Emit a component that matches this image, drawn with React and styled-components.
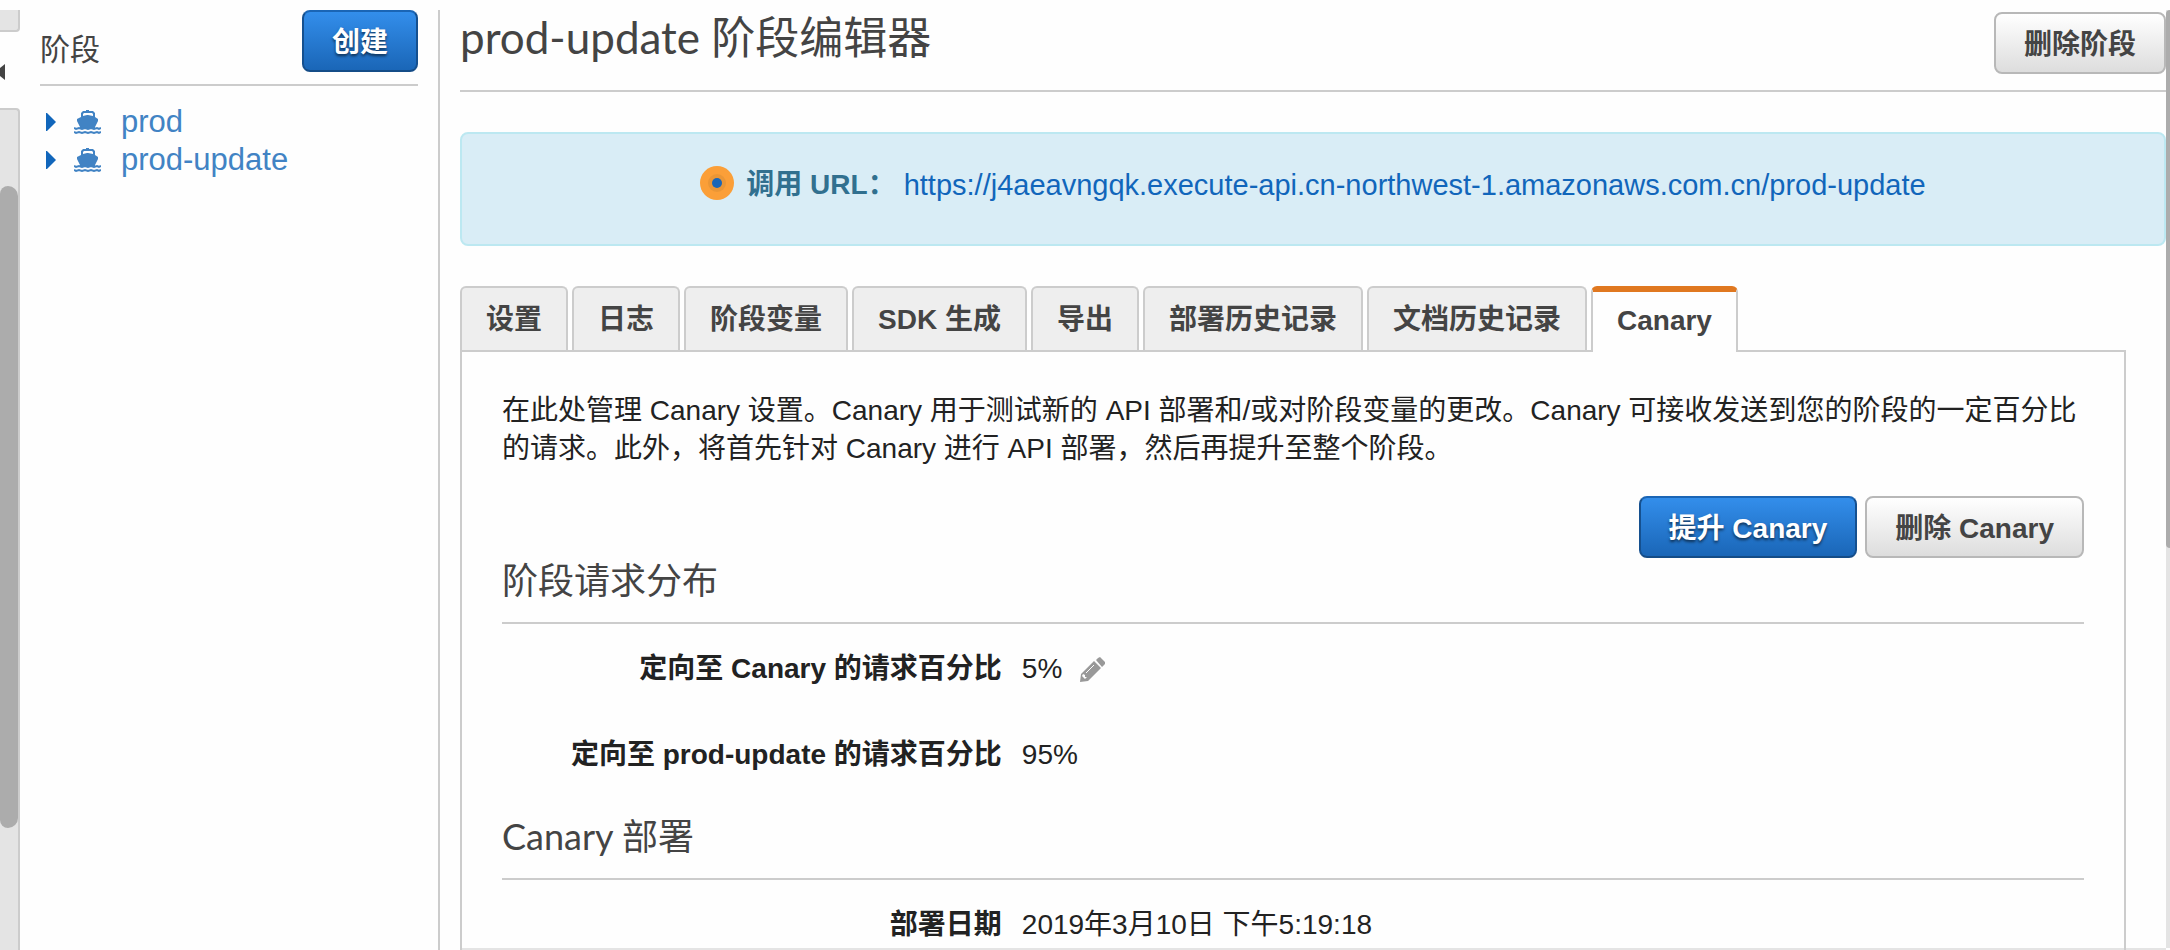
import React from "react";
import styled, { createGlobalStyle, css } from "styled-components";

const sans = `"Liberation Sans", "Noto Sans CJK SC", sans-serif`;
const display = `Lato, "Noto Sans CJK SC", sans-serif`;
const line = "#ccc";

const GlobalStyle = createGlobalStyle`
  * { box-sizing: border-box; }
  body {
    margin: 0;
    background: #fefefe;
    color: #222;
    font: 28px/38px ${sans};
    overflow: hidden;
  }
  h1, h2, h3, p, ul, dl, dd { margin: 0; padding: 0; }
`;

const Page = styled.div`
  display: flex;
  height: 100vh;
  padding-top: 10px;
`;

const Rail = styled.div`
  flex: none;
  width: 20px;
  display: flex;
  flex-direction: column;
`;

const RailTop = styled.div`
  height: 22px;
  background: #e4e4e4;
  border: solid ${line};
  border-width: 0 2px 2px 0;
  border-radius: 0 0 4px 0;
`;

const CollapseButton = styled.button`
  height: 76px;
  padding: 4px 0 0;
  border: 0;
  background: none;
  display: flex;
  align-items: center;
  svg { display: block; }
`;

const RailTrack = styled.div`
  flex: 1;
  padding-top: 76px;
  background: #e4e4e4;
  border: solid ${line};
  border-width: 2px 2px 0 0;
  border-radius: 0 4px 0 0;
`;

const RailThumb = styled.div`
  height: 84%;
  max-height: 642px;
  background: #acacac;
  border-radius: 8px 10px 10px 8px;
`;

const Sidebar = styled.nav`
  flex: none;
  width: 420px;
  padding: 0 20px;
  border-right: 2px solid ${line};
`;

const SidebarHeader = styled.header`
  display: flex;
  justify-content: space-between;
  align-items: flex-start;
  height: 76px;
  border-bottom: 2px solid ${line};
`;

const SidebarTitle = styled.h2`
  padding-top: 21px;
  color: #444;
  font: 400 30px/38px ${sans};
`;

const StageList = styled.ul`
  list-style: none;
  padding-top: 17px;
`;

const StageItem = styled.li`
  display: flex;
  align-items: center;
  height: 38px;
  padding-left: 6px;
`;

const Caret = styled.svg`
  flex: none;
  width: 10px;
  height: 18px;
  margin-right: 18px;
`;

const StageLink = styled.a`
  display: flex;
  align-items: center;
  gap: 20px;
  color: #4183c4;
  font-size: 31px;
  text-decoration: none;
`;

const Button = styled.button`
  height: 62px;
  padding: 3px 28px 0;
  border: 2px solid #b8b8b8;
  border-radius: 8px;
  background: linear-gradient(#fff, #ddd);
  color: #444;
  font: 700 28px/38px ${sans};
  white-space: nowrap;
  ${(p) =>
    p.$primary &&
    css`
      border-color: #1a65b5 #15508f #144c87;
      background: linear-gradient(#338eeb, #1a66b7);
      color: #fff;
      text-shadow: 0 2px 3px rgba(0, 0, 0, 0.6);
    `}
`;

const Main = styled.main`
  flex: 1;
  min-width: 0;
  margin-left: 20px;
  display: flex;
  flex-direction: column;
  border-bottom: 2px solid #e4e4e4;
`;

const TitleBar = styled.header`
  flex: none;
  display: flex;
  justify-content: space-between;
  align-items: flex-start;
  height: 82px;
  padding-top: 2px;
  border-bottom: 2px solid ${line};
`;

const Title = styled.h1`
  color: #444;
  font: 400 44px/50px ${display};
`;

const InvokeBox = styled.section`
  flex: none;
  display: flex;
  justify-content: center;
  height: 114px;
  margin: 40px 0;
  padding: 32px 0;
  border: 2px solid #bce8f1;
  border-radius: 8px;
  background: #d9edf6;
  color: #31708f;
`;

const Beacon = styled.svg`
  width: 34px;
  height: 34px;
  margin-right: 12px;
`;

const InvokeUrl = styled.a`
  margin-left: 8px;
  color: #1166bb;
  font-size: 29px;
  text-decoration: none;
`;

const TabBar = styled.div`
  flex: none;
  display: flex;
  gap: 4px;
  height: 64px;
`;

const Tab = styled.button`
  height: 64px;
  padding: 2px 24px 0;
  border: 2px solid ${line};
  border-bottom: 0;
  border-radius: 6px 6px 0 0;
  background: #eee;
  color: #444;
  font: 700 28px/38px ${sans};
  white-space: nowrap;
  ${(p) =>
    p.$active &&
    css`
      height: 66px;
      padding-bottom: 4px;
      border-top: 6px solid #e07820;
      background: #fefefe;
      z-index: 1;
    `}
`;

const Panel = styled.section`
  flex: 1;
  margin-right: 40px;
  padding: 40px 40px 0;
  border: 2px solid ${line};
  border-bottom: 0;
`;

const Actions = styled.div`
  display: flex;
  justify-content: flex-end;
  gap: 8px;
  margin-top: 28px;
`;

const SectionTitle = styled.h3`
  height: 66px;
  border-bottom: 2px solid ${line};
  color: #444;
  font: 400 36px/44px ${display};
`;

const Fields = styled.dl`
  display: grid;
  gap: 48px;
  padding: 26px 0 40px;
`;

const Field = styled.div`
  display: grid;
  grid-template-columns: 8fr 17fr;
  gap: 20px;
  height: 38px;
`;

const FieldLabel = styled.dt`
  font-weight: 700;
  text-align: right;
`;

const FieldValue = styled.dd`
  display: flex;
  align-items: center;
  gap: 18px;
`;

const EditButton = styled.button`
  padding: 0;
  border: 0;
  background: none;
  svg { display: block; }
`;

const Scrollbar = styled.div`
  flex: none;
  width: 4px;
  margin-bottom: 2px;
  background: #e4e4e4;
`;

const ScrollThumb = styled.div`
  height: 538px;
  background: #acacac;
  border-radius: 8px 0 0 8px;
`;

const ShipIcon = () => (
  <svg width="27" height="26" viewBox="0 0 27 26" aria-hidden="true">
    <g fill="#4183c4">
      <path
        fillRule="evenodd"
        d="M12 1h3v1h4l2 2v4l3 2v2l-3 6v1H6v-1l-3-6v-2l4-2V4l2-2h3zM9 5v2l4-1h1l5 1V5l-1-1h-8z"
      />
    </g>
    <g fill="none" stroke="#4183c4" strokeWidth="2">
      <path d="M0 19l2 1 3-1 3 1 3-1 3 1 3-1 3 1 3-1 2 1 2-1" />
      <path d="M0 23l2 1 3-1 3 1 3-1 3 1 3-1 3 1 3-1 2 1 2-1" />
    </g>
  </svg>
);

const PencilIcon = () => (
  <svg width="25" height="25" viewBox="0 0 25 25" aria-hidden="true">
    <path fill="#999" d="M18 1l2-1 5 5v2l-3 3-6-7zM14 4l7 7L8 24l-8 1 1-8z" />
    <path d="M14 8L6 16" stroke="#fefefe" strokeWidth="1" />
    <path fill="#fefefe" d="M3 17l2 1v2h2l-2 2-3-3z" />
  </svg>
);

const stages = ["prod", "prod-update"];
const tabs = ["设置", "日志", "阶段变量", "SDK 生成", "导出", "部署历史记录", "文档历史记录", "Canary"];

export default function App() {
  return (
    <Page>
      <GlobalStyle />
      <Rail>
        <RailTop />
        <CollapseButton aria-label="收起">
          <svg width="5" height="18" viewBox="0 0 5 18">
            <path d="M0 5L5 1v16l-5-4z" fill="#444" />
          </svg>
        </CollapseButton>
        <RailTrack>
          <RailThumb />
        </RailTrack>
      </Rail>
      <Sidebar>
        <SidebarHeader>
          <SidebarTitle>阶段</SidebarTitle>
          <Button $primary>创建</Button>
        </SidebarHeader>
        <StageList>
          {stages.map((s) => (
            <StageItem key={s}>
              <Caret viewBox="0 0 10 18">
                <path d="M0 0h1l9 9-9 9H0z" fill="#1166bb" />
              </Caret>
              <StageLink href="#">
                <ShipIcon />
                {s}
              </StageLink>
            </StageItem>
          ))}
        </StageList>
      </Sidebar>
      <Main>
        <TitleBar>
          <Title>prod-update 阶段编辑器</Title>
          <Button>删除阶段</Button>
        </TitleBar>
        <InvokeBox>
          <Beacon viewBox="0 0 34 34" aria-hidden="true">
            <circle cx="17" cy="17" r="17" fill="#fb9f38" />
            <circle cx="17" cy="17" r="9" fill="#ea9636" />
            <circle cx="17" cy="17" r="5" fill="#1a66b7" />
          </Beacon>
          <strong>调用 URL：</strong>
          <InvokeUrl href="#">
            https://j4aeavngqk.execute-api.cn-northwest-1.amazonaws.com.cn/prod-update
          </InvokeUrl>
        </InvokeBox>
        <TabBar role="tablist">
          {tabs.map((t) => (
            <Tab key={t} role="tab" aria-selected={t === "Canary"} $active={t === "Canary"}>
              {t}
            </Tab>
          ))}
        </TabBar>
        <Panel>
          <p>
            在此处管理 Canary 设置。Canary 用于测试新的 API 部署和/或对阶段变量的更改。Canary
            可接收发送到您的阶段的一定百分比的请求。此外，将首先针对 Canary 进行 API
            部署，然后再提升至整个阶段。
          </p>
          <Actions>
            <Button $primary>提升 Canary</Button>
            <Button>删除 Canary</Button>
          </Actions>
          <SectionTitle>阶段请求分布</SectionTitle>
          <Fields>
            <Field>
              <FieldLabel>定向至 Canary 的请求百分比</FieldLabel>
              <FieldValue>
                5%
                <EditButton aria-label="编辑">
                  <PencilIcon />
                </EditButton>
              </FieldValue>
            </Field>
            <Field>
              <FieldLabel>定向至 prod-update 的请求百分比</FieldLabel>
              <FieldValue>95%</FieldValue>
            </Field>
          </Fields>
          <SectionTitle>Canary 部署</SectionTitle>
          <Fields>
            <Field>
              <FieldLabel>部署日期</FieldLabel>
              <FieldValue>2019年3月10日 下午5:19:18</FieldValue>
            </Field>
          </Fields>
        </Panel>
      </Main>
      <Scrollbar>
        <ScrollThumb />
      </Scrollbar>
    </Page>
  );
}
